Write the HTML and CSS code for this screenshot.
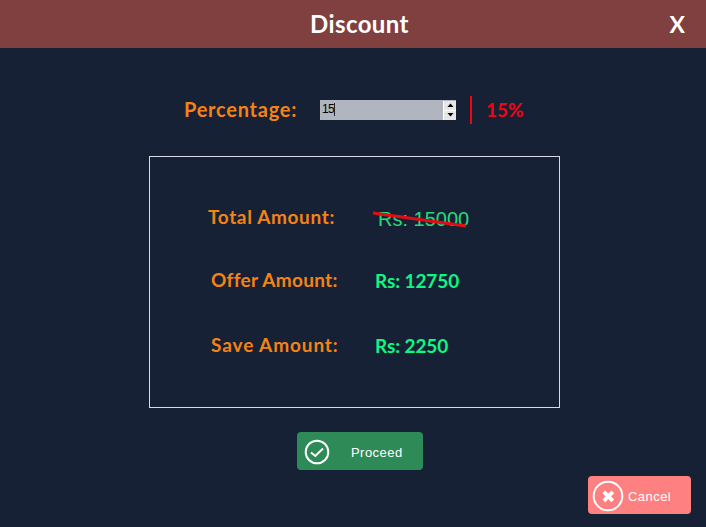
FILE: index.html
```html
<!DOCTYPE html>
<html lang="en">
<head>
<meta charset="utf-8">
<title>Discount</title>
<link rel="stylesheet" href="styles.css">
</head>
<body>
<header class="titlebar">
  <h1 class="title">Discount</h1>
  <button class="close">X</button>
</header>
<main class="content">
  <section class="entry">
    <span class="label label-percentage">Percentage:</span>
    <div class="spinner">
      <span class="spinner-value">15</span><span class="caret"></span>
      <div class="steps">
        <span class="step"><svg width="7" height="4" viewBox="0 0 7 4"><path d="M.5 4L3.5 .5L6.5 4Z"/></svg></span>
        <span class="step"><svg width="7" height="4" viewBox="0 0 7 4"><path d="M.5 0L3.5 3.5L6.5 0Z"/></svg></span>
      </div>
    </div>
    <span class="divider"></span>
    <span class="percent">15%</span>
  </section>
  <section class="panel">
    <div class="row row-total">
      <span class="label label-total">Total Amount:</span>
      <span class="original">Rs: 15000
        <svg class="strike" width="96" height="18" viewBox="0 0 96 18"><path d="M1 2L94 15"/></svg>
      </span>
    </div>
    <div class="row row-offer">
      <span class="label label-offer">Offer Amount:</span>
      <span class="amount amount-offer">Rs: 12750</span>
    </div>
    <div class="row row-save">
      <span class="label label-save">Save Amount:</span>
      <span class="amount amount-save">Rs: 2250</span>
    </div>
  </section>
  <button class="button proceed">
    <svg width="26" height="26" viewBox="0 0 26 26"><circle cx="13" cy="13" r="11.3"/><path d="M7 13.5L11.3 17L19 9.5"/></svg>
    <span>Proceed</span>
  </button>
  <button class="button cancel">
    <svg width="32" height="32" viewBox="0 0 32 32"><circle cx="16" cy="16" r="14.3"/><path class="cross" d="M11.8 11.8L20.8 20.8M20.8 11.8L11.8 20.8"/></svg>
    <span>Cancel</span>
  </button>
</main>
</body>
</html>
```

FILE: styles.css
```css
* { box-sizing: border-box; }
body {
  margin: 0;
  width: 706px;
  height: 527px;
  overflow: hidden;
  background: #162136;
  font-family: Lato, "Liberation Sans", sans-serif;
}
button { border: 0; padding: 0; color: #fff; }
svg { display: block; flex: none; }
.titlebar {
  display: grid;
  grid-template-columns: 310px 100px 1fr;
  align-items: center;
  height: 48px;
  padding-right: 21px;
  background: #804040;
}
.title {
  grid-column: 2;
  margin: 0;
  color: #fff;
  font-size: 24px;
  line-height: 46px;
  font-weight: 700;
  white-space: nowrap;
  letter-spacing: 0.4px;
}
.close {
  justify-self: end;
  background: none;
  font: 700 23px/46px Lato, sans-serif;
}
.content { display: flex; flex-direction: column; }
.entry {
  display: flex;
  align-items: center;
  height: 28px;
  margin: 48px 0 0 184px;
}
.label, .amount, .percent {
  white-space: nowrap;
  font-size: 19px;
  line-height: 24px;
  font-weight: 700;
}
.label { color: #f58314; }
.label-percentage { width: 136px; margin-top: -2px; font-size: 20px; letter-spacing: 0.75px; }
.spinner {
  display: flex;
  align-items: center;
  width: 136px;
  height: 20px;
  padding-left: 2px;
  background: #b0b5bf;
  color: #000;
  font: 12px/18px "Liberation Sans", sans-serif;
}
.spinner-value { margin-top: -2px; letter-spacing: -0.6px; }
.caret { width: 1px; height: 13px; margin-top: -2px; background: #222; }
.steps {
  display: flex;
  flex-direction: column;
  gap: 1px;
  margin-left: auto;
  width: 13px;
  padding-left: 1px;
  background: #fff;
}
.step { display: flex; align-items: center; justify-content: center; height: 9px; background: #e6e6e4; }
.divider { width: 2px; height: 28px; margin-left: 14px; background: #f00613; }
.percent { margin-left: 14px; color: #f00613; }
.panel {
  width: 411px;
  height: 252px;
  margin: 32px 0 0 149px;
  padding-top: 48px;
  border: 1px solid #d5dae3;
}
.row { display: flex; height: 26px; }
.row-total { padding-left: 58px; }
.row-offer { margin-top: 37px; padding-left: 61px; }
.row-save { margin-top: 39px; padding-left: 61px; }
.label-total { width: 170px; letter-spacing: 0.65px; }
.label-offer, .label-save { width: 164px; }
.label-offer { letter-spacing: 0.3px; }
.label-save { letter-spacing: 0.9px; }
.amount { line-height: 26px; color: #0df783; }
.amount-offer { letter-spacing: -0.1px; }
.amount-save { letter-spacing: -0.1px; }
.original {
  position: relative;
  color: #28d978;
  font: 20px/28px "Liberation Sans", sans-serif;
  white-space: nowrap;
}
.strike { position: absolute; left: -6px; top: 6px; fill: none; stroke: #e20d12; stroke-width: 3; }
.button {
  display: flex;
  align-items: center;
  height: 38px;
  border-radius: 4px;
  font: 13px/18px "Liberation Sans", sans-serif;
  letter-spacing: 0.45px;
}
.button svg { fill: none; stroke: #fff; stroke-width: 2; }
.button span { margin-top: 2px; }
.proceed { width: 126px; margin: 24px 0 0 297px; padding: 2px 0 0 7px; gap: 21px; background: #2e8b57; }
.cancel { width: 103px; margin: 6px 0 0 588px; padding: 2px 0 0 4px; gap: 4px; background: #ff8080; }
.button .cross { stroke-width: 4; }
```
